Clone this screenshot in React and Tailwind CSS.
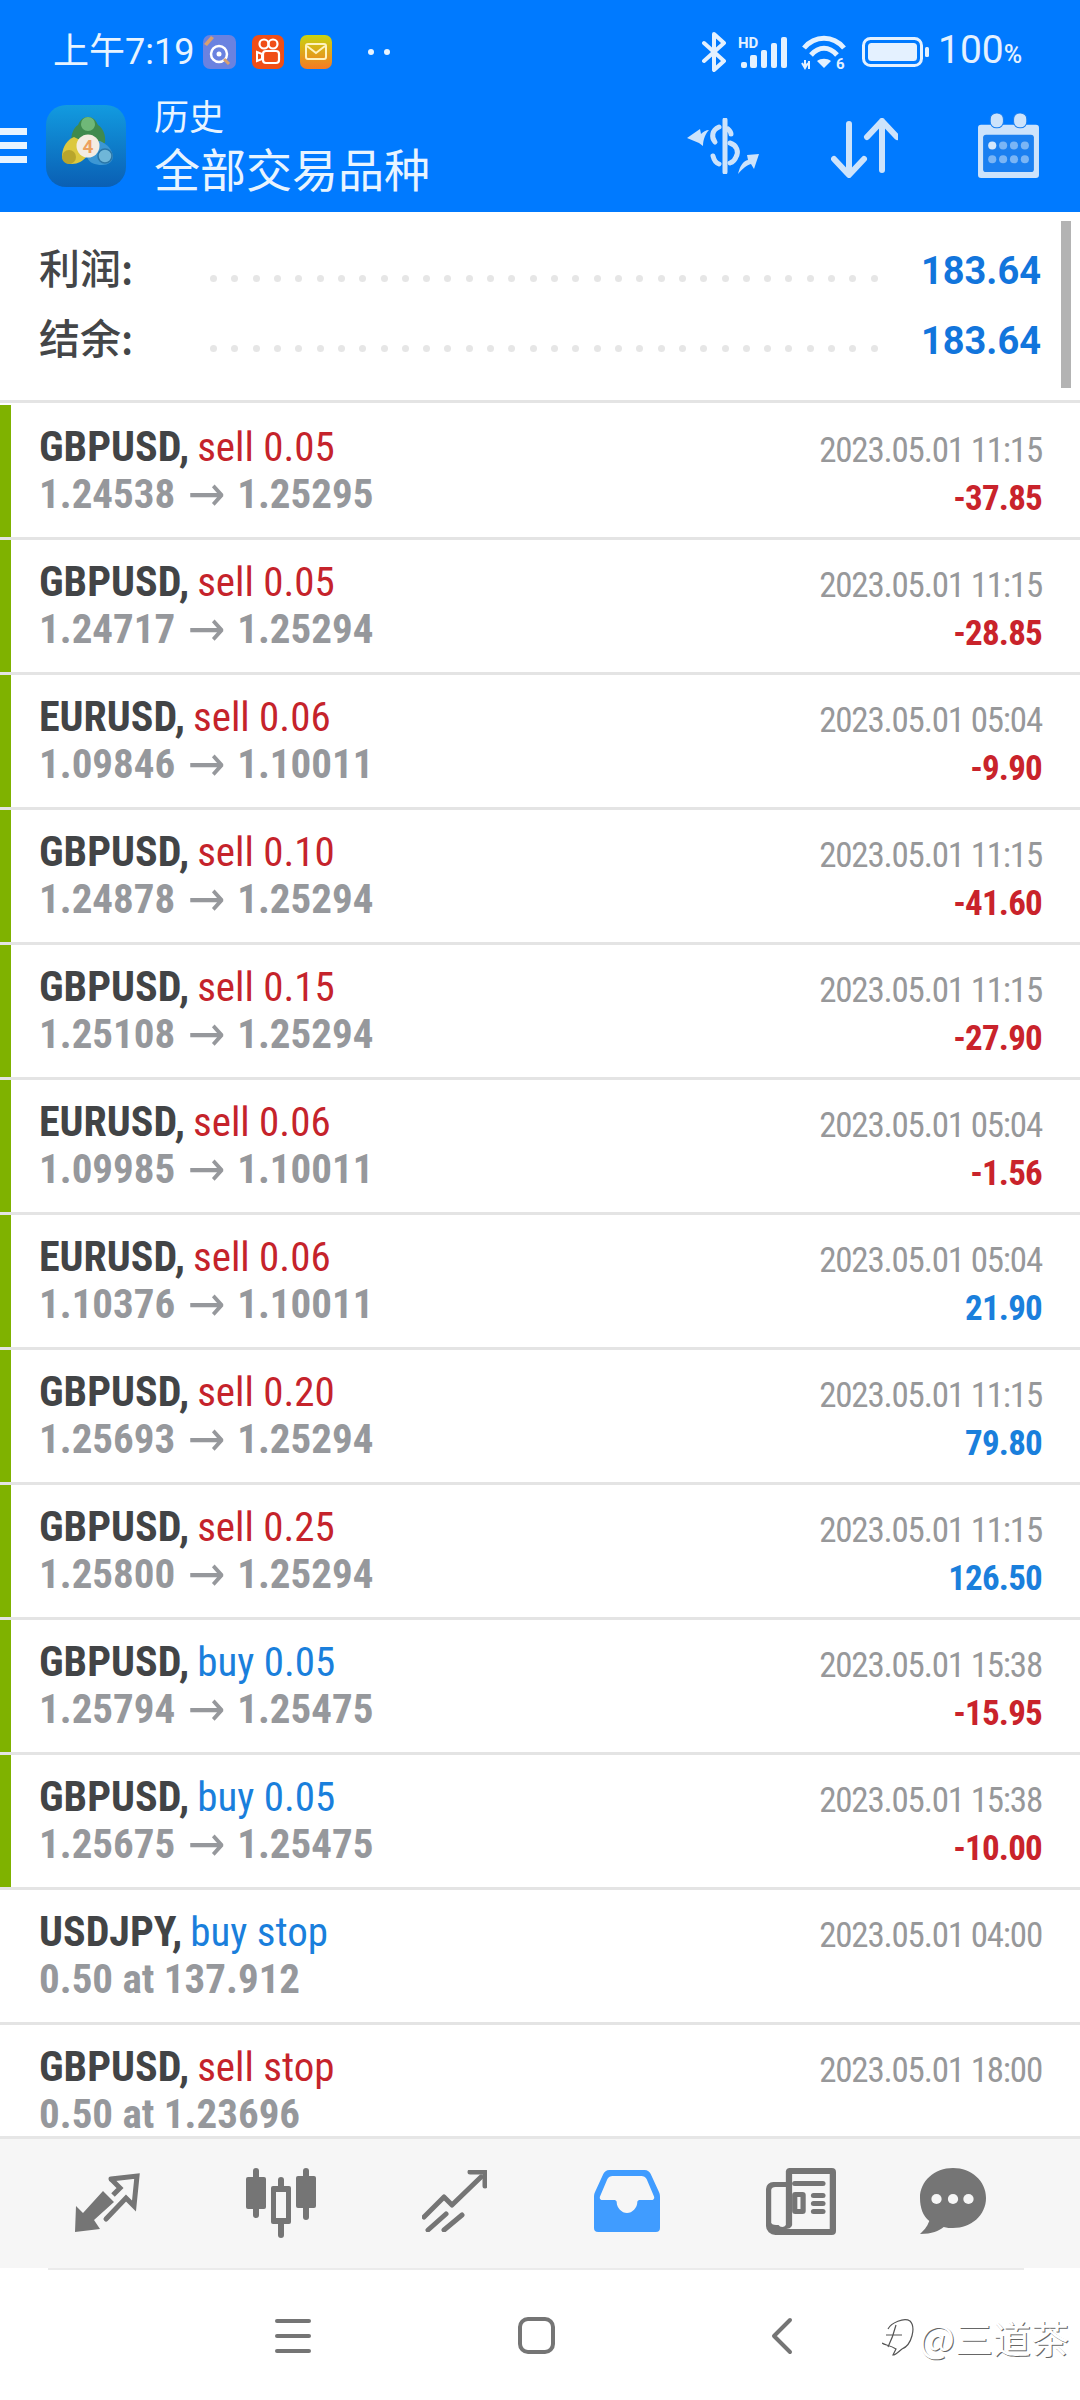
import React from "react";

const rows = [
  ["GBPUSD,", "sell 0.05", "1.24538", "1.25295", "2023.05.01 11:15", "-37.85", 1],
  ["GBPUSD,", "sell 0.05", "1.24717", "1.25294", "2023.05.01 11:15", "-28.85", 1],
  ["EURUSD,", "sell 0.06", "1.09846", "1.10011", "2023.05.01 05:04", "-9.90", 1],
  ["GBPUSD,", "sell 0.10", "1.24878", "1.25294", "2023.05.01 11:15", "-41.60", 1],
  ["GBPUSD,", "sell 0.15", "1.25108", "1.25294", "2023.05.01 11:15", "-27.90", 1],
  ["EURUSD,", "sell 0.06", "1.09985", "1.10011", "2023.05.01 05:04", "-1.56", 1],
  ["EURUSD,", "sell 0.06", "1.10376", "1.10011", "2023.05.01 05:04", "21.90", 1],
  ["GBPUSD,", "sell 0.20", "1.25693", "1.25294", "2023.05.01 11:15", "79.80", 1],
  ["GBPUSD,", "sell 0.25", "1.25800", "1.25294", "2023.05.01 11:15", "126.50", 1],
  ["GBPUSD,", "buy 0.05", "1.25794", "1.25475", "2023.05.01 15:38", "-15.95", 1],
  ["GBPUSD,", "buy 0.05", "1.25675", "1.25475", "2023.05.01 15:38", "-10.00", 1],
  ["USDJPY,", "buy stop", "0.50 at 137.912", null, "2023.05.01 04:00", "", 0],
  ["GBPUSD,", "sell stop", "0.50 at 1.23696", null, "2023.05.01 18:00", "", 0],
];

function Row({ r }) {
  const [sym, type, a, b, date, profit, bar] = r;
  const buy = type.startsWith("buy");
  const neg = profit.startsWith("-");
  return (
    <div className="flex h-[135px] shrink-0 border-b-[3px] border-[#e4e4e4] font-['Roboto',sans-serif]">
      <div className={bar ? "w-[11px] shrink-0 bg-[#7fb200]" : "w-[11px] shrink-0"} />
      <div className="flex-1 pl-[28px] pt-[18px] text-[41px] leading-[48px] [font-stretch:75%]">
        <div className="whitespace-nowrap">
          <span className="text-[42px] font-bold text-[#424446]">{sym}</span>
          <span className={"ml-[8px] " + (buy ? "text-[#1a7fdc]" : "text-[#c5232b]")}>{type}</span>
        </div>
        <div className="-mt-[1px] flex h-[48px] items-center whitespace-nowrap font-bold text-[#96989c]">
          <span>{a}</span>
          {b && <span className="w-[62px] text-center font-['DejaVu_Sans',sans-serif] text-[50px] font-normal leading-[48px] text-[#96989c]">→</span>}
          {b && <span>{b}</span>}
        </div>
      </div>
      <div className="pr-[38px] pt-[22px] text-right text-[35px] leading-[48px] [font-stretch:75%]">
        <div className="whitespace-nowrap tracking-[-1.2px] text-[#97989a]">{date}</div>
        <div className={"h-[48px] font-bold tracking-[-0.8px] " + (neg ? "text-[#c9232b]" : "text-[#1a7fdc]")}>{profit}</div>
      </div>
    </div>
  );
}

function Summary({ label }) {
  return (
    <div className="flex h-[70px] items-center">
      <div className="-mt-[5px] h-[75px] w-[171px] font-['Noto_Sans_CJK_SC',sans-serif] text-[41px] font-medium leading-[70px] text-[#444648]">{label}</div>
      <div className="flex w-[668px] justify-between pt-[14px]">
        {Array.from({ length: 32 }).map((_, i) => (
          <span key={i} className="h-[7px] w-[7px] rounded-full bg-[#e6e6e6]" />
        ))}
      </div>
      <div className="ml-auto font-['Roboto',sans-serif] text-[38px] font-bold text-[#1275dc]">183.64</div>
    </div>
  );
}

function Logo() {
  return (
    <svg width="80" height="82" viewBox="0 0 80 82" className="shrink-0">
      <defs>
        <linearGradient id="lg" x1="0" y1="0" x2="0" y2="1">
          <stop offset="0" stopColor="#129be0" />
          <stop offset="1" stopColor="#0a5fb4" />
        </linearGradient>
      </defs>
      <rect width="80" height="82" rx="20" fill="url(#lg)" />
      <path d="M42 12c6 0 8 4 10 8 5 3 8 10 7 18H25c0-8 2-15 7-18 2-4 4-8 10-8z" fill="#3f8a4e" />
      <path d="M42 12a7 7 0 0 1 7 7c0 4-3 7-7 7s-7-3-7-7a7 7 0 0 1 7-7z" fill="#6fb878" />
      <path d="M28 32c-7 3-11 9-12 18 0 6 4 9 10 9 6 0 11-3 14-7l-4-16z" fill="#dcc83f" />
      <circle cx="23" cy="52" r="7" fill="#b8a52c" />
      <path d="M54 36c7 3 12 8 13 15 0 6-5 9-11 9-7 0-13-2-15-8l4-14z" fill="#3c97d4" />
      <circle cx="59" cy="51" r="7" fill="#6fb6d8" stroke="#2a76a8" strokeWidth="1.5" />
      <circle cx="42" cy="41" r="11.5" fill="#f4ece2" />
      <text x="42" y="48" textAnchor="middle" fontSize="19" fontWeight="700" fill="#eda05e" fontFamily="Roboto, sans-serif">4</text>
    </svg>
  );
}

function DollarIcon() {
  return (
    <svg width="72" height="56" viewBox="0 0 72 56" fill="none" stroke="#cde3fb" strokeLinecap="round">
      <path d="M38 2v52" strokeWidth="5" />
      <path d="M32 9c-7 3-8 10-4 15M44 16c0-2-1-3-3-5" strokeWidth="5" />
      <path d="M26 38c1 4 3 7 6 8M43 25c7 2 9 9 6 14-1 3-3 5-6 6" strokeWidth="5" />
      <path d="M0 20l13-9 1 5c2-2 5-4 8-4-3 3-6 9-6 16l-4-3z" fill="#cde3fb" stroke="none" />
      <path d="M72 36l-12 1 1 5c-5 1-8 6-10 14 4-5 9-9 13-10l3 5z" fill="#cde3fb" stroke="none" />
    </svg>
  );
}

function ArrowsIcon() {
  return (
    <svg width="67" height="60" viewBox="0 0 67 60" fill="none" stroke="#cde3fb" strokeWidth="6" strokeLinecap="round" strokeLinejoin="round">
      <path d="M18 6v50M3 41l15 16 15-16" />
      <path d="M51 52V3M36 19L51 3l15 16" />
    </svg>
  );
}

function CalendarIcon() {
  return (
    <svg width="63" height="65" viewBox="0 0 62 66" preserveAspectRatio="none">
      <path d="M4 12h54a3 3 0 0 1 3 3v48a3 3 0 0 1-3 3H4a3 3 0 0 1-3-3V15a3 3 0 0 1 3-3z" fill="#cde3fb" />
      <rect x="6" y="22" width="50" height="38" rx="3" fill="#1a7ff0" />
      <rect x="13" y="0" width="13" height="15" rx="6" fill="#cde3fb" stroke="#1a7ff0" strokeWidth="1" />
      <rect x="36" y="0" width="13" height="15" rx="6" fill="#cde3fb" stroke="#1a7ff0" strokeWidth="1" />
      {[0, 1, 2, 3].map((i) => (
        <circle key={i} cx={15 + i * 10.7} cy="33" r="4" fill={i === 0 ? "#d5e8fc" : "#7ab5f5"} />
      ))}
      {[0, 1, 2, 3].map((i) => (
        <circle key={i} cx={15 + i * 10.7} cy="47" r="4" fill="#7ab5f5" />
      ))}
    </svg>
  );
}

const StatusLeftIcons = () => (
  <div className="ml-[9px] flex items-center gap-[16px]">
    <svg width="33" height="34" viewBox="0 0 33 34">
      <rect width="33" height="34" rx="7" fill="#6a82e0" />
      <circle cx="16" cy="19" r="8" fill="none" stroke="#fff" strokeWidth="2.5" />
      <circle cx="16" cy="19" r="2.5" fill="#fff" />
      <path d="M1 9L8 1l3 2-7 8z" fill="#d8a070" />
      <path d="M21 24l5 5" stroke="#d8a070" strokeWidth="3" />
    </svg>
    <svg width="32" height="34" viewBox="0 0 32 34">
      <rect width="32" height="34" rx="7" fill="#f04e16" />
      <circle cx="12" cy="9" r="4.5" fill="none" stroke="#fff" strokeWidth="2.2" />
      <circle cx="21" cy="9" r="4.5" fill="none" stroke="#fff" strokeWidth="2.2" />
      <rect x="11" y="16" width="16" height="12" rx="3" fill="none" stroke="#fff" strokeWidth="2.2" />
      <path d="M10 19l-5-2v9l5-2z" fill="none" stroke="#fff" strokeWidth="2" />
    </svg>
    <svg width="32" height="34" viewBox="0 0 32 34">
      <defs>
        <linearGradient id="ml" x1="0" y1="0" x2="0" y2="1">
          <stop offset="0" stopColor="#c8d410" />
          <stop offset="1" stopColor="#f57a24" />
        </linearGradient>
      </defs>
      <rect width="32" height="34" rx="7" fill="url(#ml)" />
      <rect x="6" y="9" width="20" height="15" rx="2" fill="none" stroke="#fff3c0" strokeWidth="2" />
      <path d="M7 11l9 7 9-7" fill="none" stroke="#fff3c0" strokeWidth="2" />
    </svg>
    <div className="ml-[20px] flex gap-[10px]">
      <span className="h-[6px] w-[6px] rounded-full bg-[#e8f4ff]" />
      <span className="h-[6px] w-[6px] rounded-full bg-[#e8f4ff]" />
    </div>
  </div>
);

const StatusRightIcons = () => (
  <div className="flex items-center">
    <svg width="25" height="40" viewBox="0 0 25 40" fill="none" stroke="#e4f1ff" strokeWidth="4" strokeLinejoin="round" strokeLinecap="round">
      <path d="M2 11l20 18-10 9V2l10 9L2 29" />
    </svg>
    <svg width="50" height="34" viewBox="0 0 50 34" className="ml-[11px]">
      <text x="0" y="13" fontSize="15" fontWeight="700" fill="#e4f1ff" fontFamily="Roboto, sans-serif">HD</text>
      <rect x="3" y="27" width="6" height="6" rx="2" fill="#e4f1ff" />
      <rect x="12" y="20" width="7" height="13" rx="2" fill="#e4f1ff" />
      <rect x="23" y="15" width="6" height="18" rx="2" fill="#e4f1ff" />
      <rect x="33" y="8" width="6" height="25" rx="2" fill="#e4f1ff" />
      <rect x="43" y="2" width="6" height="31" rx="2" fill="#e4f1ff" />
    </svg>
    <svg width="46" height="36" viewBox="0 0 46 36" className="ml-[13px]" fill="none" stroke="#e4f1ff" strokeWidth="5">
      <path d="M3 14C14 1 32 1 43 14" />
      <path d="M10 21c8-9 18-9 26 0" />
      <path d="M23 34l-7-7c4-3 10-3 14 0z" fill="#e4f1ff" stroke="none" />
      <text x="35" y="35" fontSize="15" fontWeight="700" fill="#e4f1ff" stroke="none" fontFamily="Roboto, sans-serif">6</text>
      <path d="M1 29l3 5 3-5M4 34v-8M8 27v8" strokeWidth="2" />
    </svg>
    <svg width="68" height="30" viewBox="0 0 68 30" className="ml-[15px]">
      <rect x="1.5" y="1.5" width="58" height="27" rx="7" fill="none" stroke="#e4f1ff" strokeWidth="3" />
      <rect x="6" y="6" width="49" height="18" rx="3.5" fill="#e4f1ff" />
      <rect x="63" y="10" width="4" height="10" rx="1.5" fill="#e4f1ff" />
    </svg>
    <div className="ml-[8px] flex w-[83px] items-baseline whitespace-nowrap font-['Roboto',sans-serif] text-[#e4f1ff]">
      <span className="text-[39px] leading-[40px]">100</span>
      <span className="text-[25px] font-medium leading-[40px]">%</span>
    </div>
  </div>
);

const G = "#757575";
const BG = "#f6f6f6";
const NavIcons = () => (
  <div className="flex h-[132px] shrink-0 items-start border-t-[3px] border-[#e6e6e6] bg-[#f6f6f6] pl-[75px] pt-[29px]">
    <svg width="66" height="60" viewBox="0 0 66 60" className="mt-[5px]">
      <path d="M36 6l26-3-3 30-8-8-20 21" fill="none" stroke={G} strokeWidth="5" strokeLinecap="round" />
      <path d="M36 6l9 9-7 7" fill="none" stroke={G} strokeWidth="5" />
      <path d="M0 59L1 33l7 7 20-22 11 11-20 18 6 9z" fill={G} />
    </svg>
    <svg width="70" height="70" viewBox="0 0 70 70" className="ml-[105px]">
      <rect x="0" y="9" width="20" height="32" rx="2" fill={G} />
      <rect x="7" y="0" width="6" height="50" rx="3" fill={G} />
      <rect x="50" y="8" width="20" height="32" rx="2" fill={G} />
      <rect x="57" y="0" width="6" height="52" rx="3" fill={G} />
      <rect x="25" y="18" width="20" height="38" rx="2" fill={G} />
      <rect x="32" y="9" width="6" height="61" rx="3" fill={G} />
      <rect x="30" y="24" width="10" height="26" fill={BG} />
    </svg>
    <svg width="65" height="62" viewBox="0 0 65 62" fill="none" stroke={G} strokeWidth="5" strokeLinecap="round" strokeLinejoin="round" className="ml-[106px] mt-[2px]">
      <path d="M2 47l20-20 8 8 29-28" />
      <path d="M48 2h15v14" />
      <path d="M6 60l18-16" />
      <path d="M22 60l18-15" />
    </svg>
    <svg width="66" height="62" viewBox="0 0 64 62" preserveAspectRatio="none" className="ml-[107px] mt-[2px]">
      <path d="M15 0h34c3 0 5 2 6 4l8 18c1 2 1 4 1 6v30a4 4 0 0 1-4 4H4a4 4 0 0 1-4-4V28c0-2 0-4 1-6L9 4c1-2 3-4 6-4z" fill="#409cff" />
      <path d="M18 6h28c2 0 4 1 5 3l7 17c1 2 0 4-2 4H44c-1 0-2 1-2 2 0 6-5 11-10 11s-10-5-10-11c0-1-1-2-2-2H8c-2 0-3-2-2-4l7-17c1-2 3-3 5-3z" fill={BG} />
    </svg>
    <svg width="70" height="67" viewBox="0 0 67 67" preserveAspectRatio="none" className="ml-[106px]">
      <path d="M19 3a4 4 0 0 1 4-3h40a4 4 0 0 1 4 4v59a4 4 0 0 1-4 4H9a9 9 0 0 1-9-9V21a7 7 0 0 1 7-7h12z" fill={G} />
      <path d="M12 19h7v38a4 4 0 0 1-7 0c-3 0-6 0-7-2V22c0-2 2-3 4-3z" fill={BG} />
      <path d="M25 6h36v55H18c4 0 6-1 7-4z" fill={BG} />
      <rect x="25" y="13" width="32" height="5" rx="2.5" fill={G} />
      <rect x="25" y="24" width="13" height="22" rx="3" fill={G} />
      <rect x="30" y="29" width="3" height="12" fill={BG} />
      <rect x="43" y="25" width="14" height="5" rx="2.5" fill={G} />
      <rect x="43" y="33" width="14" height="5" rx="2.5" fill={G} />
      <rect x="43" y="41" width="14" height="5" rx="2.5" fill={G} />
    </svg>
    <svg width="66" height="67" viewBox="0 0 64 67" preserveAspectRatio="none" className="ml-[84px]">
      <path d="M32 0c18 0 32 13 32 30S50 60 32 60c-3 0-6 0-9-1-5 4-11 7-23 7 3-3 7-7 9-13C3 48 0 40 0 30 0 13 14 0 32 0z" fill={G} />
      <circle cx="16" cy="31" r="5" fill={BG} />
      <circle cx="32" cy="31" r="5" fill={BG} />
      <circle cx="47" cy="31" r="5" fill={BG} />
    </svg>
  </div>
);

export default function App() {
  return (
    <div className="relative flex h-[2400px] w-[1080px] flex-col overflow-hidden bg-white">
      <header className="h-[212px] shrink-0 bg-[#007aff]">
        <div className="flex h-[100px] items-center justify-between pl-[53px] pr-[59px] pt-[4px]">
          <div className="flex items-center">
            <span className="whitespace-nowrap font-['Roboto','Noto_Sans_CJK_SC',sans-serif] text-[36px] leading-[40px] text-[#e8f4ff]">上午7:19</span>
            <StatusLeftIcons />
          </div>
          <StatusRightIcons />
        </div>
        <div className="flex h-[112px] items-start">
          <div className="mt-[28px] flex w-[27px] flex-col gap-[7px]">
            <span className="h-[7px] bg-[#e8f4ff]" />
            <span className="h-[7px] bg-[#e8f4ff]" />
            <span className="h-[7px] bg-[#e8f4ff]" />
          </div>
          <div className="ml-[19px] mt-[5px]"><Logo /></div>
          <div className="ml-[28px] mt-[-8px] font-['Noto_Sans_CJK_SC',sans-serif] text-[#e8f4ff]">
            <div className="text-[35px] leading-[46px]">历史</div>
            <div className="text-[46px] leading-[58px]">全部交易品种</div>
          </div>
          <div className="ml-auto mr-[40px] mt-[18px] flex items-start">
            <DollarIcon />
            <div className="ml-[72px]"><ArrowsIcon /></div>
            <div className="ml-[79px] mt-[-5px]"><CalendarIcon /></div>
          </div>
        </div>
      </header>

      <section className="relative h-[191px] shrink-0 border-b-[3px] border-[#e4e4e4] pl-[39px] pr-[39px] pt-[24px]">
        <Summary label="利润:" />
        <Summary label="结余:" />
        <div className="absolute left-[1061px] top-[9px] h-[167px] w-[10px] bg-[#b3b3b3]" />
      </section>

      <main className="mt-[2px] flex min-h-0 flex-1 flex-col overflow-hidden">
        {rows.map((r, i) => (
          <Row key={i} r={r} />
        ))}
      </main>

      <NavIcons />
      <div className="ml-[48px] mr-[56px] h-[2px] shrink-0 bg-[#ebebeb]" />

      <div className="flex h-[130px] shrink-0 items-start pl-[275px] pt-[47px]">
        <div className="flex w-[36px] flex-col gap-[11px] pt-[2px]">
          <span className="h-[4px] rounded-full bg-[#757575]" />
          <span className="h-[4px] rounded-full bg-[#757575]" />
          <span className="h-[4px] rounded-full bg-[#757575]" />
        </div>
        <div className="ml-[207px] h-[37px] w-[37px] rounded-[10px] border-[4px] border-[#757575]" />
        <svg width="22" height="38" viewBox="0 0 22 38" fill="none" stroke="#757575" strokeWidth="4" strokeLinecap="round" strokeLinejoin="round" className="ml-[216px]">
          <path d="M19 3L3 19l16 16" />
        </svg>
      </div>

      <div className="absolute left-[882px] top-[2315px] flex items-center font-['Noto_Sans_CJK_SC',sans-serif] text-[38px] leading-[44px] text-white [text-shadow:1px_1px_0_#666]">
        <svg width="34" height="44" viewBox="0 0 34 44" fill="none" stroke="#555" strokeWidth="1.2">
          <path d="M6 14c3-6 16-12 22-8 6 6 2 24-8 28-3 2-6 6-9 6l3-6C8 30 2 30 0 28" />
          <path d="M14 10c-2 8-6 18-8 22M4 20h16" />
        </svg>
        <span className="ml-[3px]">@三道茶</span>
      </div>
    </div>
  );
}
